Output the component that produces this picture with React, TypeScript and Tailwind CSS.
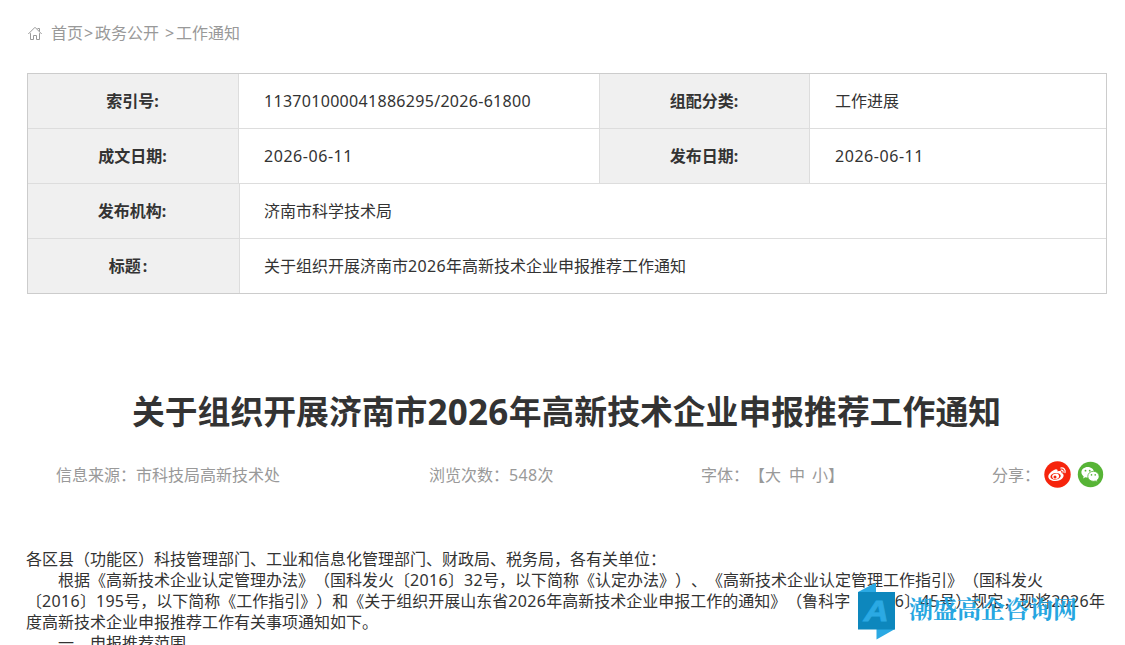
import type { ReactNode } from 'react';

interface Field {
  label: string;
  value: ReactNode;
}

const pairs: Field[][] = [
  [
    { label: '索引号:', value: <span className="tracking-[0.3px]">113701000041886295/2026-61800</span> },
    { label: '组配分类:', value: '工作进展' },
  ],
  [
    { label: '成文日期:', value: <span className="tracking-[0.55px]">2026-06-11</span> },
    { label: '发布日期:', value: <span className="tracking-[0.55px]">2026-06-11</span> },
  ],
];

const paragraphs = [
  '各区县（功能区）科技管理部门、工业和信息化管理部门、财政局、税务局，各有关单位：',
  '　　根据《高新技术企业认定管理办法》（国科发火〔2016〕32号，以下简称《认定办法》）、《高新技术企业认定管理工作指引》（国科发火',
  '〔2016〕195号，以下简称《工作指引》）和《关于组织开展山东省2026年高新技术企业申报工作的通知》（鲁科字〔2016〕45号）规定，现将2026年',
  '度高新技术企业申报推荐工作有关事项通知如下。',
  '　　一、申报推荐范围',
];

// Digits are set slightly wider than the rest of the line
function Digits({ text }: { text: string }) {
  return text.split(/(\d+)/).map((part, i) =>
    /^\d/.test(part) ? (
      <span key={i} className="tracking-[0.32px]">
        {part}
      </span>
    ) : (
      part
    )
  );
}

function HomeIcon() {
  return (
    <svg className="h-[15px] w-[15px]" viewBox="0 0 15 15" fill="none" stroke="#999" strokeWidth="1">
      <path d="M0.3 8 L7 1.3 L13.7 8" />
      <path d="M2.500 7.200 V13.500 H5.500 V9.500 H8.500 V13.500 H11.500 V7.200" />
      <path d="M9.500 2.500 H11.500 V5.500" />
    </svg>
  );
}

function WeiboIcon() {
  return (
    <svg className="h-[27px] w-[27px]" viewBox="0 0 27 27">
      <circle cx="13.5" cy="13.5" r="13.2" fill="#f6240c" />
      <path
        fill="#fff"
        d="M11.2 8.400c1.700-.6 2.800.3 2.300 2.100 2.300-.9 4.500-.6 4 1.600 1.900.6 2.600 1.900 1.800 3.800-1.200 2.600-4.400 4.100-8 4.100-4 0-7-1.900-7-4.600 0-2.600 3.600-6 6.900-7z"
      />
      <ellipse cx="11.600" cy="15.300" rx="5.200" ry="3.300" fill="#f6240c" transform="rotate(-8 11.600 15.300)" />
      <ellipse cx="11.600" cy="15.400" rx="3.500" ry="2.700" fill="#fff" transform="rotate(-15 11.600 15.400)" />
      <circle cx="11" cy="15.900" r="1.500" fill="#f6240c" />
      <path
        fill="none"
        stroke="#fff"
        strokeWidth="1.200"
        strokeLinecap="round"
        d="M16.800 7c2.800-.6 5 1.700 4.200 4.600M17.200 9.200c1.400-.2 2.200.7 1.800 2"
      />
    </svg>
  );
}

function WechatIcon() {
  return (
    <svg className="h-[27px] w-[27px]" viewBox="0 0 27 27">
      <circle cx="13.500" cy="13.500" r="12.700" fill="#57b436" />
      <path
        fill="#fff"
        d="M10.700 5.900c-3.500 0-6.300 2.300-6.300 5.400 0 1.700.9 3.200 2.300 4.200l-.6 2 2.200-1.200c.8.200 1.600.3 2.400.3 3.500 0 6.300-2.300 6.300-5.300s-2.800-5.400-6.300-5.400z"
      />
      <path
        fill="#fff"
        stroke="#57b436"
        strokeWidth=".8"
        d="M16.400 10.300c-3.200 0-5.600 2.200-5.600 5s2.400 5 5.600 5c.7 0 1.400-.1 2-.3l2 1.200-.5-1.800c1.400-.9 2.200-2.400 2.200-4.100 0-2.800-2.600-5-5.700-5z"
      />
      <g fill="#57b436">
        <circle cx="8.500" cy="9.700" r=".9" />
        <circle cx="12.700" cy="9.700" r=".9" />
        <circle cx="14.500" cy="13.900" r=".8" />
        <circle cx="18.200" cy="13.900" r=".8" />
      </g>
    </svg>
  );
}

function Watermark() {
  return (
    <div className="absolute left-[857px] top-[582px] flex h-[59px] items-center text-[#26a6e1]">
      <svg className="h-[59px] w-[39px]" viewBox="0 0 39 59">
        <path fill="#2ba9e3" d="M1 10 L19 0.500 V10 Z M19.500 47 H38 L19.500 57.500 Z" />
        <rect x="1" y="10" width="37" height="37.500" fill="#0d87bd" />
        <text
          x="6.800"
          y="39"
          textLength="25"
          lengthAdjust="spacingAndGlyphs"
          className="fill-[#2ba9e3] stroke-[#2ba9e3] font-['Liberation_Sans',sans-serif] text-[30px] font-bold italic"
          strokeWidth=".8"
        >
          A
        </text>
      </svg>
      <span className="ml-[13px] -mt-1 whitespace-nowrap font-['Liberation_Serif','Noto_Serif_CJK_SC','Noto_Sans_CJK_SC',serif] text-[24px] font-bold leading-6">
        潮盛高企咨询网
      </span>
    </div>
  );
}

export default function App() {
  return (
    <div className="relative h-[645px] w-[1125px] overflow-hidden bg-white font-['Noto_Sans','Noto_Sans_CJK_SC',sans-serif] text-base text-[#333] [text-spacing-trim:space-all]">
      {/* Breadcrumb */}
      <nav className="flex h-[73px] items-center pb-[7px] pl-7 text-[#999]">
        <HomeIcon />
        <span className="ml-2">首页</span>
        <span className="ml-px w-[11px]">&gt;</span>
        <span>政务公开</span>
        <span className="ml-[6px] w-[11px]">&gt;</span>
        <span>工作通知</span>
      </nav>

      {/* Document info */}
      <div className="ml-[27px] h-[221px] w-[1080px] divide-y divide-[#ddd] border border-[#ccc]">
        {pairs.map((pair) => (
          <div key={pair[0].label} className="grid h-[55px] grid-cols-[211px_361px_210px_1fr] leading-[54px]">
            {pair.map((field) => (
              <div key={field.label} className="group contents">
                <div className="border-r border-[#ddd] bg-[#f0f0f0] pr-px text-center font-bold">{field.label}</div>
                <div className="border-[#ddd] pl-[25px] group-first:border-r">{field.value}</div>
              </div>
            ))}
          </div>
        ))}
        <div className="grid h-[55px] grid-cols-[212px_1fr] leading-[54px]">
          <div className="border-r border-[#ddd] bg-[#f0f0f0] pr-[3px] text-center font-bold">发布机构:</div>
          <div className="pl-6">济南市科学技术局</div>
        </div>
        <div className="grid h-[54px] grid-cols-[212px_1fr] leading-[54px]">
          <div className="border-r border-[#ddd] bg-[#f0f0f0] pr-[11px] text-center font-bold">
            标题<span className="pl-[2px]">:</span>
          </div>
          <div className="pl-6">
            <Digits text="关于组织开展济南市2026年高新技术企业申报推荐工作通知" />
          </div>
        </div>
      </div>

      {/* Article heading */}
      <h1 className="mt-[92px] flex h-[52px] items-center justify-center pl-2 text-[32.85px] font-bold leading-[52px] whitespace-nowrap">
        关于组织开展济南市<span className="text-[35px] tracking-[0.3px]">2026</span>年高新技术企业申报推荐工作通知
      </h1>
      <div className="mt-[23px] flex h-[27px] items-center whitespace-nowrap pl-14 text-[#999]">
        <span className="w-[373px]">信息来源：市科技局高新技术处</span>
        <span className="w-[272px]">
          <Digits text="浏览次数：548次" />
        </span>
        <span className="w-[291px]">
          字体：【大<span className="pl-2">中</span>
          <span className="pl-[7px]">小】</span>
        </span>
        <span className="w-[52px]">分享：</span>
        <WeiboIcon />
        <span className="ml-[6px]">
          <WechatIcon />
        </span>
      </div>

      {/* Article body */}
      <div className="ml-[26px] mt-[61px] leading-[21px]">
        {paragraphs.map((line) => (
          <p key={line} className="h-[21px] whitespace-pre">
            <Digits text={line} />
          </p>
        ))}
      </div>

      <Watermark />
    </div>
  );
}
